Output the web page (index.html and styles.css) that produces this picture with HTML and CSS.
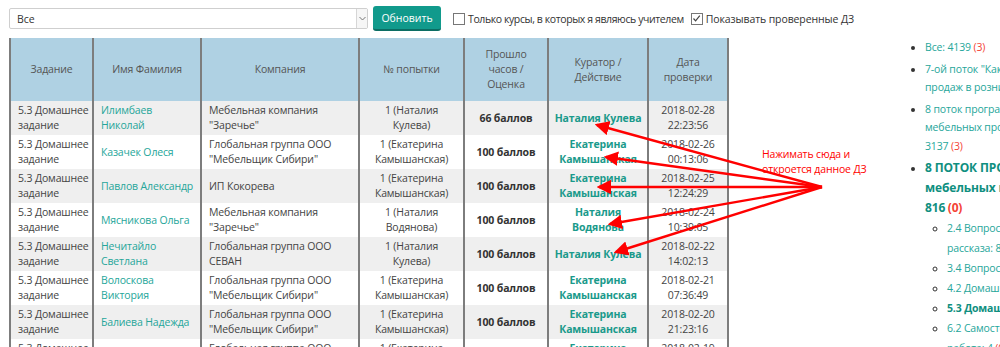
FILE: index.html
```html
<!DOCTYPE html>
<html lang="ru">
<head>
  <meta charset="UTF-8">
  <title>Домашние задания</title>
  <link rel="stylesheet" href="styles.css">
</head>
<body>

<div class="page">
  <div class="main">
    <div class="toolbar">
      <div class="select-wrap">
        <select class="course-select">
          <option>Все</option>
        </select>
        <span class="select-arrow">
          <svg width="7" height="5" viewBox="0 0 7 5"><path d="M0.5 1 L3.5 4 L6.5 1" fill="none" stroke="#777" stroke-width="1"/></svg>
        </span>
      </div>
      <button class="btn-refresh">Обновить</button>
      <label class="check"><span class="box"></span>Только курсы, в которых я являюсь учителем</label>
      <label class="check"><span class="box"><svg width="9" height="9" viewBox="0 0 9 9"><path d="M1.5 4.5 L3.6 6.8 L7.8 1.6" fill="none" stroke="#444" stroke-width="1.2"/></svg></span>Показывать проверенные ДЗ</label>
    </div>

    <table class="hw-table">
      <colgroup>
        <col style="width: 83px">
        <col style="width: 108px">
        <col style="width: 158px">
        <col style="width: 105px">
        <col style="width: 84px">
        <col style="width: 100px">
        <col style="width: 80px">
      </colgroup>
      <thead>
        <tr>
          <th>Задание</th>
          <th>Имя Фамилия</th>
          <th>Компания</th>
          <th>№ попытки</th>
          <th>Прошло часов / Оценка</th>
          <th>Куратор / Действие</th>
          <th>Дата проверки</th>
        </tr>
      </thead>
      <tbody>
        <tr>
          <td class="task">5.3 Домашнее задание</td>
          <td class="student"><a href="#">Илимбаев Николай</a></td>
          <td class="company">Мебельная компания "Заречье"</td>
          <td class="attempt">1 (Наталия Кулева)</td>
          <td class="score">66 баллов</td>
          <td class="curator"><a href="#">Наталия Кулева</a></td>
          <td class="center">2018-02-28 22:23:56</td>
        </tr>
        <tr>
          <td class="task">5.3 Домашнее задание</td>
          <td class="student"><a href="#">Казачек Олеся</a></td>
          <td class="company">Глобальная группа ООО "Мебельщик Сибири"</td>
          <td class="attempt">1 (Екатерина Камышанская)</td>
          <td class="score">100 баллов</td>
          <td class="curator"><a href="#">Екатерина Камышанская</a></td>
          <td class="center">2018-02-26 00:13:06</td>
        </tr>
        <tr>
          <td class="task">5.3 Домашнее задание</td>
          <td class="student"><a href="#">Павлов Александр</a></td>
          <td class="company">ИП Кокорева</td>
          <td class="attempt">1 (Екатерина Камышанская)</td>
          <td class="score">100 баллов</td>
          <td class="curator"><a href="#">Екатерина Камышанская</a></td>
          <td class="center">2018-02-25 12:24:29</td>
        </tr>
        <tr>
          <td class="task">5.3 Домашнее задание</td>
          <td class="student"><a href="#">Мясникова Ольга</a></td>
          <td class="company">Мебельная компания "Заречье"</td>
          <td class="attempt">1 (Наталия Водянова)</td>
          <td class="score">100 баллов</td>
          <td class="curator"><a href="#">Наталия Водянова</a></td>
          <td class="center">2018-02-24 10:39:05</td>
        </tr>
        <tr>
          <td class="task">5.3 Домашнее задание</td>
          <td class="student"><a href="#">Нечитайло Светлана</a></td>
          <td class="company">Глобальная группа ООО СЕВАН</td>
          <td class="attempt">1 (Наталия Кулева)</td>
          <td class="score">100 баллов</td>
          <td class="curator"><a href="#">Наталия Кулева</a></td>
          <td class="center">2018-02-22 14:02:13</td>
        </tr>
        <tr>
          <td class="task">5.3 Домашнее задание</td>
          <td class="student"><a href="#">Волоскова Виктория</a></td>
          <td class="company">Глобальная группа ООО "Мебельщик Сибири"</td>
          <td class="attempt">1 (Екатерина Камышанская)</td>
          <td class="score">100 баллов</td>
          <td class="curator"><a href="#">Екатерина Камышанская</a></td>
          <td class="center">2018-02-21 07:36:49</td>
        </tr>
        <tr>
          <td class="task">5.3 Домашнее задание</td>
          <td class="student"><a href="#">Балиева Надежда</a></td>
          <td class="company">Глобальная группа ООО "Мебельщик Сибири"</td>
          <td class="attempt">1 (Екатерина Камышанская)</td>
          <td class="score">100 баллов</td>
          <td class="curator"><a href="#">Екатерина Камышанская</a></td>
          <td class="center">2018-02-20 21:23:16</td>
        </tr>
        <tr>
          <td class="task">5.3 Домашнее задание</td>
          <td class="student"><a href="#">Зайцева Марина</a></td>
          <td class="company">Глобальная группа ООО "Мебельщик Сибири"</td>
          <td class="attempt">1 (Екатерина Камышанская)</td>
          <td class="score">100 баллов</td>
          <td class="curator"><a href="#">Екатерина Камышанская</a></td>
          <td class="center">2018-02-19 18:10:42</td>
        </tr>
      </tbody>
    </table>
  </div>

  <aside class="sidebar">
    <ul class="streams">
      <li><a href="#">Все: 4139</a> <span class="new">(3)</span></li>
      <li><a href="#">7-ой поток "Как увеличить объем<br>продаж в рознице": 186</a> <span class="new">(0)</span></li>
      <li><a href="#">8 поток программы обучения<br>мебельных продавцов розницы:<br>3137</a> <span class="new">(3)</span></li>
      <li class="active">
        <a href="#">8 ПОТОК ПРОГРАММЫ ДЛЯ<br>мебельных продавцов:<br>816</a> <span class="new">(0)</span>
        <ul class="lessons">
          <li><a href="#">2.4 Вопросы по теме<br>рассказа: 8</a> <span class="new">(0)</span></li>
          <li><a href="#">3.4 Вопросы по теме: 5</a> <span class="new">(0)</span></li>
          <li><a href="#">4.2 Домашнее задание: 3</a> <span class="new">(0)</span></li>
          <li class="current"><a href="#">5.3 Домашнее задание: 9</a> <span class="new">(0)</span></li>
          <li><a href="#">6.2 Самостоятельная<br>работа: 4</a> <span class="new">(0)</span></li>
        </ul>
      </li>
    </ul>
  </aside>

  <div class="note">Нажимать сюда и<br>откроется данное ДЗ</div>

  <svg class="arrows" width="1000" height="347" viewBox="0 0 1000 347">
    <defs>
      <marker id="head" markerWidth="6" markerHeight="6" refX="5" refY="3" orient="auto" markerUnits="strokeWidth">
        <path d="M0 0 L6 3 L0 6 Z" fill="#ff0000"/>
      </marker>
    </defs>
    <g stroke="#ff0000" stroke-width="2.4" marker-end="url(#head)">
      <line x1="822" y1="187" x2="597" y2="125"/>
      <line x1="822" y1="187" x2="606" y2="157"/>
      <line x1="822" y1="187" x2="599" y2="187"/>
      <line x1="822" y1="187" x2="610" y2="224"/>
      <line x1="822" y1="187" x2="616" y2="252"/>
    </g>
  </svg>
</div>

</body>
</html>
```

FILE: styles.css
```css
body {
  margin: 0;
  font-family: "Open Sans", "Liberation Sans", sans-serif;
  font-size: 10.5px;
  letter-spacing: -0.15px;
  color: #444444;
  background: #ffffff;
  overflow: hidden;
}

a {
  color: #26a69a;
  text-decoration: none;
}

.page {
  position: relative;
  display: flex;
  width: 1000px;
  height: 347px;
  overflow: hidden;
}

.main {
  flex: none;
  width: 885px;
}

/* toolbar */

.toolbar {
  display: flex;
  align-items: center;
  height: 25px;
  padding: 6px 0 0 9px;
  white-space: nowrap;
}

.select-wrap {
  position: relative;
  flex: none;
  width: 359px;
  height: 21px;
}

.course-select {
  appearance: none;
  -webkit-appearance: none;
  width: 100%;
  height: 21px;
  padding: 0 0 0 7px;
  border: 1px solid #cfcfcf;
  border-radius: 2px;
  background: #ffffff;
  font-family: inherit;
  font-size: 10.5px;
  color: #333333;
}

.select-arrow {
  position: absolute;
  top: 1px;
  right: 1px;
  width: 10px;
  height: 19px;
  display: flex;
  align-items: center;
  justify-content: center;
  border-left: 1px solid #d6d6d6;
  background: #f6f6f6;
}

.btn-refresh {
  flex: none;
  margin-left: 5px;
  width: 68px;
  height: 25px;
  padding: 0;
  border: none;
  border-bottom: 2px solid #0b6d63;
  border-radius: 3px;
  background: #119a8c;
  color: #ffffff;
  font-family: inherit;
  font-size: 10.5px;
}

.check {
  display: flex;
  align-items: center;
  margin-left: 12px;
  letter-spacing: -0.4px;
  color: #333333;
}

.check + .check {
  margin-left: 7px;
  letter-spacing: -0.1px;
}

.box {
  display: flex;
  align-items: center;
  justify-content: center;
  width: 10px;
  height: 10px;
  margin-right: 3px;
  border: 1px solid #777777;
  background: #ffffff;
}

/* table */

.hw-table {
  margin: 7px 0 0 9px;
  width: 718px;
  table-layout: fixed;
  border-collapse: collapse;
}

.hw-table th,
.hw-table td {
  border-left: 2px solid #7d7d7d;
  border-right: 2px solid #7d7d7d;
  line-height: 15px;
  vertical-align: middle;
}

.hw-table th {
  height: 45px;
  padding: 9px 10px;
  background: #afd1e3;
  color: #555555;
  font-weight: normal;
  text-align: center;
}

.hw-table td {
  height: 30px;
  padding: 2px 4px;
  color: #444444;
}

.hw-table td.task,
.hw-table td.student,
.hw-table td.company {
  padding-left: 7px;
}

.hw-table td.task {
  padding-right: 1px;
}

.hw-table td.student {
  padding-right: 6px;
}

.hw-table td.attempt {
  padding: 2px 8px;
}

.hw-table tbody tr:nth-child(odd) td {
  background: #efefef;
}

.hw-table .center,
.hw-table .attempt,
.hw-table .score,
.hw-table .curator {
  text-align: center;
}

.hw-table .score {
  font-weight: bold;
  color: #333333;
}

.hw-table .curator a {
  font-weight: bold;
  color: #1a9a8b;
}

/* sidebar */

.sidebar {
  flex: none;
  padding-top: 38px;
  font-size: 10.5px;
  white-space: nowrap;
}

.streams {
  margin: 0;
  padding-left: 40px;
  list-style: disc;
  color: #333333;
}

.streams > li {
  line-height: 18.5px;
  margin-bottom: 3px;
}

.streams .new {
  color: #f44336;
}

.streams > li.active > a,
.streams > li.active > .new {
  font-size: 12px;
  font-weight: bold;
  line-height: 20px;
}

.streams > li.active > a {
  color: #0f8f80;
}

.lessons {
  margin: 0;
  padding-left: 22px;
  list-style: circle;
}

.lessons li {
  font-size: 10.5px;
  line-height: 20px;
}

.lessons li.current a {
  font-weight: bold;
  color: #0f8f80;
}

/* annotation */

.note {
  position: absolute;
  left: 762px;
  top: 147px;
  font-size: 10.5px;
  line-height: 15px;
  color: #ff0000;
}

.arrows {
  position: absolute;
  left: 0;
  top: 0;
  pointer-events: none;
}
```
